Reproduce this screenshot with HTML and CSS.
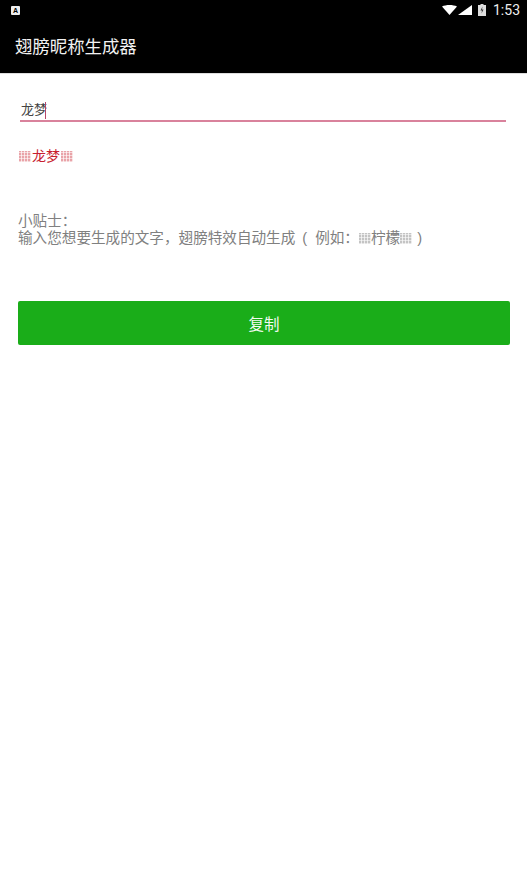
FILE: index.html
```html
<!DOCTYPE html>
<html lang="zh-CN">
<head>
    <meta charset="UTF-8">
    <meta name="viewport" content="width=device-width, initial-scale=1.0">
    <title>翅膀昵称生成器</title>
    <link rel="stylesheet" href="styles.css">
</head>
<body>
    <div class="status-bar">
        <span class="notice-icon">A</span>
        <div class="status-right">
            <svg class="wifi" width="15" height="10" viewBox="0 0 15 10"><path d="M0 1.500C2 .5 4.700 0 7.500 0S13 .5 15 1.500L7.500 10z" fill="#fff"/></svg>
            <svg class="signal" width="14" height="10" viewBox="0 0 14 10"><path d="M14 0v10H0z" fill="#fff"/></svg>
            <svg class="battery" width="8" height="12" viewBox="0 0 8 12"><path d="M2.500 0h3v1H8v11H0V1h2.500z" fill="#ddd"/><path d="M4.500 2.500 2.500 6.500H4L3.500 9.500 5.500 5.500H4z" fill="#333"/></svg>
            <span class="time">1:53</span>
        </div>
    </div>

    <div class="header">翅膀昵称生成器</div>

    <div class="content">
        <div class="name-input">龙梦<span class="caret"></span></div>

        <p class="result"><span class="tofu"></span>龙梦<span class="tofu"></span></p>

        <div class="tips">
            <p>小贴士：</p>
            <p>输入您想要生成的文字，翅膀特效自动生成<span class="paren">(</span>例如：<span class="tofu tofu-grey"></span>柠檬<span class="tofu tofu-grey"></span><span class="paren-end">)</span></p>
        </div>

        <button class="copy-btn">复制</button>
    </div>
</body>
</html>
```

FILE: styles.css
```css
* {
    margin: 0;
    padding: 0;
    box-sizing: border-box;
    font-family: "Liberation Sans", "Noto Sans CJK SC", sans-serif;
}

body {
    background: #fff;
    height: 100vh;
    overflow: hidden;
}

/* Status bar */
.status-bar {
    height: 20px;
    background: #000;
    display: flex;
    align-items: center;
    justify-content: space-between;
    padding: 0 7px 0 11px;
}

.notice-icon {
    width: 9px;
    height: 9px;
    background: #eee;
    border-radius: 1px;
    color: #000;
    font-size: 7px;
    font-weight: bold;
    line-height: 9px;
    text-align: center;
}

.status-right {
    display: flex;
    align-items: center;
}

.wifi {
    margin-right: 1px;
}

.signal {
    margin-right: 6px;
}

.battery {
    margin-right: 7px;
}

.time {
    color: #eee;
    font-family: Roboto, sans-serif;
    font-size: 14px;
    line-height: 20px;
}

/* Header */
.header {
    height: 54px;
    background: #000;
    border-bottom: 1px solid #ddd;
    color: #f2f2f2;
    font-size: 17.400px;
    line-height: 54px;
    padding-left: 15px;
}

/* Content */
.content {
    padding: 0 18px;
}

.name-input {
    margin: 26px 3px 0 2px;
    height: 22px;
    border-bottom: 2px solid #d9829c;
    color: #444;
    font-size: 13px;
    line-height: 20px;
    padding-left: 1px;
    display: flex;
    align-items: center;
}

.caret {
    width: 1px;
    height: 17px;
    margin-left: -2px;
    background: #b5476a;
}

.result {
    margin-top: 24px;
    color: #c8202f;
    font-size: 14px;
    line-height: 20px;
    display: flex;
    align-items: center;
}

.tofu {
    display: inline-block;
    width: 12px;
    height: 11px;
    margin: 0 1px;
    background:
        repeating-linear-gradient(0deg, rgba(255, 255, 255, 0.55) 0 1px, transparent 1px 3px),
        repeating-linear-gradient(90deg, #e9a3a8 0 2px, #f8e2e3 2px 3px);
}

.tofu-grey {
    margin: 0;
    background:
        repeating-linear-gradient(0deg, rgba(255, 255, 255, 0.55) 0 1px, transparent 1px 3px),
        repeating-linear-gradient(90deg, #c4c4c4 0 2px, #ececec 2px 3px);
    vertical-align: -1px;
}

.tips {
    margin-top: 47px;
    color: #808080;
    font-size: 14.600px;
    line-height: 17px;
}

.paren {
    padding: 0 8px 0 7px;
}

.paren-end {
    padding-left: 5px;
}

.copy-btn {
    display: block;
    width: 492px;
    height: 44px;
    margin-top: 54px;
    background: #1aad19;
    border: none;
    border-radius: 2px;
    color: #f2faf2;
    font-size: 15.500px;
}
```
